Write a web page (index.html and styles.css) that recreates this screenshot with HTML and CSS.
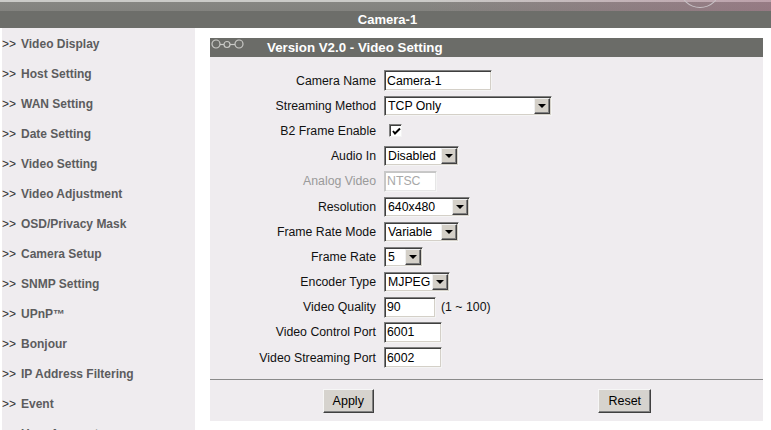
FILE: index.html
```html
<!DOCTYPE html>
<html lang="en">
<head>
  <meta charset="UTF-8" />
  <title>Video Setting</title>
  <link rel="stylesheet" href="styles.css">
</head>
<body>
  <!-- top banner -->
  <div class="topband">
    <div class="logo-ring"></div>
  </div>
  <div class="titlebar">Camera-1</div>

  <div class="layout">
    <!-- left menu -->
    <ul class="sidebar">
      <li><span class="arr">&gt;&gt;</span>Video Display</li>
      <li><span class="arr">&gt;&gt;</span>Host Setting</li>
      <li><span class="arr">&gt;&gt;</span>WAN Setting</li>
      <li><span class="arr">&gt;&gt;</span>Date Setting</li>
      <li><span class="arr">&gt;&gt;</span>Video Setting</li>
      <li><span class="arr">&gt;&gt;</span>Video Adjustment</li>
      <li><span class="arr">&gt;&gt;</span>OSD/Privacy Mask</li>
      <li><span class="arr">&gt;&gt;</span>Camera Setup</li>
      <li><span class="arr">&gt;&gt;</span>SNMP Setting</li>
      <li><span class="arr">&gt;&gt;</span>UPnP™</li>
      <li><span class="arr">&gt;&gt;</span>Bonjour</li>
      <li><span class="arr">&gt;&gt;</span>IP Address Filtering</li>
      <li><span class="arr">&gt;&gt;</span>Event</li>
      <li><span class="arr">&gt;&gt;</span>User Account</li>
    </ul>

    <!-- settings panel -->
    <div class="content">
      <div class="panel-head">
        <svg class="chain" width="36" height="12" viewBox="0 0 36 12">
          <circle cx="5" cy="5" r="4" fill="none" stroke="#c9c9c6" stroke-width="1.2"/>
          <circle cx="16" cy="5.5" r="3" fill="none" stroke="#c9c9c6" stroke-width="1.2"/>
          <circle cx="28" cy="5" r="4" fill="none" stroke="#c9c9c6" stroke-width="1.2"/>
          <line x1="9" y1="5.5" x2="13" y2="5.5" stroke="#c9c9c6" stroke-width="1.2"/>
          <line x1="19" y1="5.5" x2="24" y2="5.5" stroke="#c9c9c6" stroke-width="1.2"/>
        </svg>
        <span class="panel-title">Version V2.0 - Video Setting</span>
      </div>

      <div class="panel-body">
        <div class="form-grid">
          <label>Camera Name</label>
          <div><input class="text w108" type="text" value="Camera-1"></div>

          <label>Streaming Method</label>
          <div><span class="dropdown w168"><select><option>TCP Only</option></select><span class="arrow"></span></span></div>

          <label>B2 Frame Enable</label>
          <div><span class="check">
            <svg width="9" height="9" viewBox="0 0 9 9"><path d="M1 4 L3 6.5 L8 1.5" fill="none" stroke="#000" stroke-width="2"/></svg>
          </span></div>

          <label>Audio In</label>
          <div><span class="dropdown w75"><select><option>Disabled</option></select><span class="arrow"></span></span></div>

          <label class="disabled">Analog Video</label>
          <div><input class="text w53" type="text" value="NTSC" disabled></div>

          <label>Resolution</label>
          <div><span class="dropdown w86"><select><option>640x480</option></select><span class="arrow"></span></span></div>

          <label>Frame Rate Mode</label>
          <div><span class="dropdown w75"><select><option>Variable</option></select><span class="arrow"></span></span></div>

          <label>Frame Rate</label>
          <div><span class="dropdown w39"><select><option>5</option></select><span class="arrow"></span></span></div>

          <label>Encoder Type</label>
          <div><span class="dropdown w66"><select><option>MJPEG</option></select><span class="arrow"></span></span></div>

          <label>Video Quality</label>
          <div><input class="text w52" type="text" value="90"> <span class="hint">(1 ~ 100)</span></div>

          <label>Video Control Port</label>
          <div><input class="text w58" type="text" value="6001"></div>

          <label>Video Streaming Port</label>
          <div><input class="text w58" type="text" value="6002"></div>
        </div>

        <div class="actions">
          <div class="cell"><button>Apply</button></div>
          <div class="cell"><button>Reset</button></div>
        </div>
      </div>
    </div>
  </div>
</body>
</html>
```

FILE: styles.css
```css
body {
  margin: 0;
  font-family: "Liberation Sans", Arial, sans-serif;
  font-size: 12px;
  background: #fff;
  overflow: hidden;
}

.topband {
  position: relative;
  height: 11px;
  background:
    linear-gradient(to right, rgba(170, 120, 140, 0) 55%, rgba(170, 110, 135, 0.45)),
    linear-gradient(to bottom, #cbcbc8 0, #cbcbc8 2px, #878783 2px, #82827e 100%);
  overflow: hidden;
}

.logo-ring {
  position: absolute;
  left: 680px;
  top: -30px;
  width: 38px;
  height: 36px;
  border: 1px solid #c8c2c6;
  border-radius: 50%;
}

.titlebar {
  height: 17px;
  line-height: 17px;
  background: #6d6e6a;
  color: #fff;
  text-align: center;
  font-size: 13px;
  font-weight: bold;
  padding-left: 4px;
}

.layout {
  display: flex;
}

.sidebar {
  list-style: none;
  margin: 0 0 0 2px;
  padding: 1px 0 0 0;
  width: 193px;
  height: 420px;
  background: #efecef;
}

.sidebar li {
  height: 30px;
  line-height: 30px;
  font-weight: bold;
  color: #5c5c5e;
  white-space: nowrap;
}

.sidebar .arr {
  display: inline-block;
  width: 19px;
  font-weight: normal;
  color: #333;
}

.content {
  margin-left: 15px;
  padding-top: 10px;
  width: 553px;
}

.panel-head {
  display: flex;
  align-items: center;
  height: 19px;
  background: #6b6c68;
}

.chain {
  margin: -6px 0 0 1px;
}

.panel-title {
  margin-left: 20px;
  color: #fff;
  font-size: 13.3px;
  font-weight: bold;
}

.panel-body {
  background: #efecef;
  padding-top: 11px;
  padding-bottom: 8px;
}

.form-grid {
  display: grid;
  grid-template-columns: 166px auto;
  grid-auto-rows: 25.2px;
  column-gap: 8px;
  align-items: center;
  padding-bottom: 9px;
  border-bottom: 1px solid #8a8a8a;
}

.form-grid label {
  text-align: right;
  font-size: 12.3px;
  color: #111;
  white-space: nowrap;
}

.form-grid label.disabled {
  color: #9a9a9a;
}

.form-grid > div {
  display: flex;
  align-items: center;
}

.text {
  box-sizing: border-box;
  height: 21px;
  margin: 0;
  padding: 0 2px;
  font-family: inherit;
  font-size: 12.3px;
  color: #000;
  background: #fff;
  border-top: 1px solid #7f7f7f;
  border-left: 1px solid #7f7f7f;
  border-bottom: 1px solid #f4f4f4;
  border-right: 1px solid #f4f4f4;
  box-shadow: inset 1px 1px 0 #3f3f3f, inset -1px -1px 0 #d4d0c8;
  outline: none;
}

.text:disabled {
  color: #a8a8a8;
  background: #fff;
  box-shadow: inset 1px 1px 0 #c6c6c6, inset -1px -1px 0 #e6e6e6;
  border-top-color: #c8c8c8;
  border-left-color: #c8c8c8;
}

.hint {
  margin-left: 5px;
  font-size: 12.3px;
  color: #111;
}

.dropdown {
  position: relative;
  box-sizing: border-box;
  display: inline-block;
  height: 20px;
  background: #fff;
  border-top: 1px solid #7f7f7f;
  border-left: 1px solid #7f7f7f;
  border-bottom: 1px solid #f4f4f4;
  border-right: 1px solid #f4f4f4;
  box-shadow: inset 1px 1px 0 #3f3f3f, inset -1px -1px 0 #d4d0c8;
}

.dropdown select {
  appearance: none;
  -webkit-appearance: none;
  width: 100%;
  height: 18px;
  margin: 0;
  padding: 0 0 0 3px;
  border: none;
  background: transparent;
  font-family: inherit;
  font-size: 12.3px;
  color: #000;
  outline: none;
}

.dropdown .arrow {
  position: absolute;
  top: 1px;
  right: 1px;
  box-sizing: border-box;
  width: 16px;
  height: 16px;
  background: #d4d0c8;
  border-top: 1px solid #f0f0f0;
  border-left: 1px solid #f0f0f0;
  border-bottom: 1px solid #404040;
  border-right: 1px solid #404040;
  box-shadow: inset -1px -1px 0 #808080;
}

.dropdown .arrow::after {
  content: "";
  position: absolute;
  left: 3px;
  top: 5px;
  border-left: 4px solid transparent;
  border-right: 4px solid transparent;
  border-top: 4px solid #000;
}

.check {
  box-sizing: border-box;
  display: inline-flex;
  align-items: center;
  justify-content: center;
  width: 13px;
  height: 13px;
  margin-left: 5px;
  background: #fff;
  border-top: 1px solid #7f7f7f;
  border-left: 1px solid #7f7f7f;
  border-bottom: 1px solid #f4f4f4;
  border-right: 1px solid #f4f4f4;
  box-shadow: inset 1px 1px 0 #3f3f3f;
}

.check svg {
  margin: 1px 0 0 1px;
}

.w39 { width: 39px; }
.w52 { width: 52px; }
.w53 { width: 53px; }
.w58 { width: 58px; }
.w66 { width: 66px; }
.w75 { width: 75px; }
.w86 { width: 86px; }
.w108 { width: 108px; }
.w168 { width: 168px; }

.actions {
  display: grid;
  grid-template-columns: 1fr 1fr;
  padding-top: 9px;
}

.cell {
  text-align: center;
}

.actions button {
  height: 24px;
  padding: 0 9px;
  font-family: inherit;
  font-size: 12.5px;
  color: #000;
  background: #d6d3ce;
  border-top: 1px solid #f6f6f6;
  border-left: 1px solid #f6f6f6;
  border-bottom: 1px solid #404040;
  border-right: 1px solid #404040;
  box-shadow: inset -1px -1px 0 #808080;
  border-radius: 0;
}
```
